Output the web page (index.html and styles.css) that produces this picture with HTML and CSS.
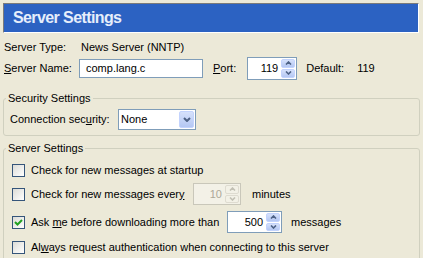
FILE: index.html
```html
<!DOCTYPE html>
<html>
<head>
    <title>Server Settings</title>
    <link rel="stylesheet" href="styles.css">
</head>
<body>
    <div class="banner">Server Settings</div>

    <div class="row info-row">
        <span class="label">Server Type:</span>
        <span class="value">News Server (NNTP)</span>
    </div>

    <div class="row name-row">
        <span class="label"><u>S</u>erver Name:</span>
        <div class="textbox name-box">comp.lang.c</div>
        <span class="port-label"><u>P</u>ort:</span>
        <div class="spin port-spin">
            <span class="spin-value">119</span>
            <span class="spin-btns">
                <span class="spin-btn"><svg width="7" height="4" viewBox="0 0 7 4"><polyline points="1,3.5 3.5,1 6,3.5" /></svg></span>
                <span class="spin-btn"><svg width="7" height="4" viewBox="0 0 7 4"><polyline points="1,0.5 3.5,3 6,0.5" /></svg></span>
            </span>
        </div>
        <span class="default-label">Default:</span>
        <span class="default-value">119</span>
    </div>

    <fieldset class="group security">
        <legend>Security Settings</legend>
        <div class="row security-row">
            <span class="sec-label">Connection sec<u>u</u>rity:</span>
            <div class="combo">
                <span class="combo-value">None</span>
                <span class="combo-btn"><svg width="8" height="5" viewBox="0 0 8 5"><polyline points="1,1 4,4 7,1" /></svg></span>
            </div>
        </div>
    </fieldset>

    <fieldset class="group server">
        <legend>Server Settings</legend>

        <div class="row check-row row-startup">
            <span class="checkbox"></span>
            <span class="check-label">Check for new messages at startup</span>
        </div>

        <div class="row check-row row-every">
            <span class="checkbox"></span>
            <span class="check-label every-label">Check for new messages ever<u>y</u></span>
            <div class="spin minutes-spin disabled">
                <span class="spin-value">10</span>
                <span class="spin-btns">
                    <span class="spin-btn"><svg width="7" height="4" viewBox="0 0 7 4"><polyline points="1,3.5 3.5,1 6,3.5" /></svg></span>
                    <span class="spin-btn"><svg width="7" height="4" viewBox="0 0 7 4"><polyline points="1,0.5 3.5,3 6,0.5" /></svg></span>
                </span>
            </div>
            <span class="after-spin minutes">minutes</span>
        </div>

        <div class="row check-row row-ask">
            <span class="checkbox checked"><svg width="9" height="9" viewBox="0 0 9 9"><polyline points="1,4 3.5,6.5 8,2" /></svg></span>
            <span class="check-label ask-label">Ask <u>m</u>e before downloading more than</span>
            <div class="spin messages-spin">
                <span class="spin-value">500</span>
                <span class="spin-btns">
                    <span class="spin-btn"><svg width="7" height="4" viewBox="0 0 7 4"><polyline points="1,3.5 3.5,1 6,3.5" /></svg></span>
                    <span class="spin-btn"><svg width="7" height="4" viewBox="0 0 7 4"><polyline points="1,0.5 3.5,3 6,0.5" /></svg></span>
                </span>
            </div>
            <span class="after-spin messages">messages</span>
        </div>

        <div class="row check-row row-auth">
            <span class="checkbox"></span>
            <span class="check-label">Al<u>w</u>ays request authentication when connecting to this server</span>
        </div>
    </fieldset>
</body>
</html>
```

FILE: styles.css
```css
* {
    box-sizing: border-box;
}

html,
body {
    overflow: hidden;
}

body {
    margin: 0;
    padding: 3px;
    background-color: #ece9d8;
    font-family: "Liberation Sans", Arial, sans-serif;
    font-size: 11px;
    color: #000;
}

u {
    text-decoration: underline;
}

.banner {
    height: 30px;
    margin-right: 1px;
    padding-left: 9px;
    background-color: #2c62c2;
    border: 1px solid;
    border-color: #7a7a7a #fff #fff #7a7a7a;
    color: #e6eefb;
    font-size: 16px;
    font-weight: bold;
    letter-spacing: -0.6px;
    line-height: 28px;
}

.row {
    display: flex;
    align-items: center;
}

.info-row {
    height: 18px;
    margin-top: 5px;
}

.label {
    width: 76px;
    padding-left: 1px;
}

.value {
    margin-left: 2px;
}

.name-row {
    height: 24px;
}

.textbox {
    width: 124px;
    height: 19px;
    padding-left: 6px;
    background-color: #fff;
    border: 1px solid #7f9db9;
    line-height: 17px;
}

.port-label {
    margin-left: 10px;
}

/* spin boxes */
.spin {
    display: flex;
    background-color: #fff;
    border: 1px solid #7f9db9;
}

.spin-value {
    flex: 1;
    align-self: center;
    text-align: right;
    padding-right: 3px;
}

.spin-btns {
    display: flex;
    flex-direction: column;
    gap: 1px;
    width: 14px;
    margin: 1px 1px 1px 0;
}

.spin-btn {
    flex: 1;
    display: flex;
    align-items: center;
    justify-content: center;
    background: linear-gradient(#d6e1fb, #b4c7f3);
    border: 1px solid #c3d3fd;
    border-radius: 2px;
}

.spin-btn polyline {
    fill: none;
    stroke: #4d6185;
    stroke-width: 1.6;
}

.port-spin {
    width: 50px;
    height: 23px;
    margin-left: 11px;
}

.default-label {
    margin-left: 9px;
}

.default-value {
    margin-left: 13px;
}

/* group boxes */
.group {
    margin: 0;
    padding: 0 2px 5px;
    border: 1px solid #d0d0bf;
    border-radius: 3px;
}

.group legend {
    padding: 0 2px;
    line-height: 13px;
}

.security {
    margin-top: 12px;
}

.security-row {
    height: 22px;
    margin-top: 3px;
}

.sec-label {
    width: 112px;
    padding-left: 4px;
}

.combo {
    display: flex;
    width: 78px;
    height: 21px;
    background-color: #fff;
    border: 1px solid #7f9db9;
}

.combo-value {
    flex: 1;
    align-self: center;
    padding-left: 2px;
}

.combo-btn {
    display: flex;
    align-items: center;
    justify-content: center;
    width: 15px;
    margin: 1px;
    background: linear-gradient(#d6e1fb, #b4c7f3);
    border: 1px solid #c3d3fd;
    border-radius: 2px;
}

.combo-btn polyline {
    fill: none;
    stroke: #4d6185;
    stroke-width: 2;
}

.server {
    margin-top: 6px;
    padding-bottom: 20px;
}

/* checkbox rows */
.checkbox {
    display: flex;
    align-items: center;
    justify-content: center;
    width: 13px;
    height: 13px;
    margin-left: 6px;
    background: linear-gradient(135deg, #dcdcd7, #fff);
    border: 1px solid #35557a;
}

.checkbox polyline {
    fill: none;
    stroke: #21a121;
    stroke-width: 2;
}

.check-label {
    margin-left: 6px;
}

.row-startup {
    height: 20px;
    margin-top: 5px;
}

.row-every {
    height: 22px;
    margin-top: 3px;
}

.row-ask {
    height: 22px;
    margin-top: 6px;
}

.row-auth {
    height: 20px;
    margin-top: 4px;
}

.every-label {
    width: 162px;
}

.ask-label {
    width: 196px;
}

.minutes-spin {
    width: 48px;
    height: 22px;
}

.messages-spin {
    width: 55px;
    height: 22px;
}

.disabled {
    background-color: #f3f1e7;
    border-color: #c9c7ba;
    color: #aca899;
}

.disabled .spin-btn {
    background: #f3f1e7;
    border-color: #dedbd0;
}

.disabled .spin-btn polyline {
    stroke: #c2c0b4;
}

.minutes {
    margin-left: 11px;
}

.messages {
    margin-left: 9px;
}
```
